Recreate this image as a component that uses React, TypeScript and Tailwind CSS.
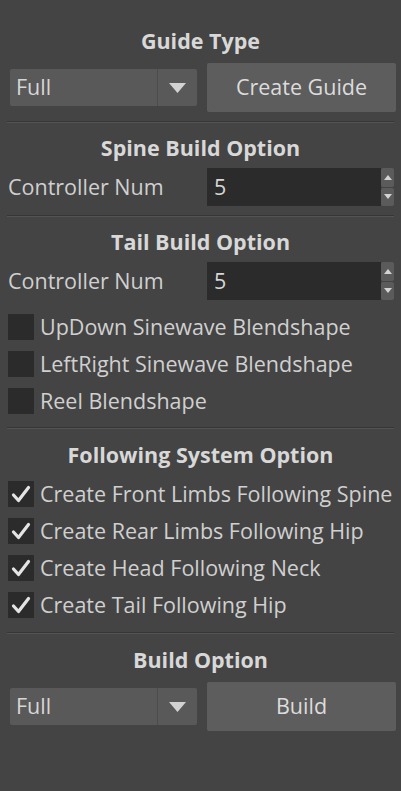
import React from "react";

function Title({ children }: { children: React.ReactNode }) {
  return (
    <div className="h-[34px] flex items-center justify-center text-[21.5px] font-bold text-[#d8d8d8]">
      {children}
    </div>
  );
}

function Separator() {
  return (
    <div className="mx-[7px]">
      <div className="h-px bg-[#363636]" />
      <div className="h-px bg-[#545454]" />
    </div>
  );
}

function Dropdown({ value }: { value: string }) {
  return (
    <div className="w-[187px] h-[37px] flex bg-[#595959] rounded-[2px]">
      <div className="flex-1 flex items-center pl-[6px] text-[21.5px] text-[#d6d6d6]">
        {value}
      </div>
      <div className="w-[40px] flex items-center justify-center border-l border-[#4c4c4c]">
        <svg width="17" height="10" viewBox="0 0 17 10">
          <path d="M0 0 H17 L8.5 10 Z" fill="#d2d2d2" />
        </svg>
      </div>
    </div>
  );
}

function Button({ label }: { label: string }) {
  return (
    <div className="w-[189px] h-[49px] flex items-center justify-center bg-[#5d5d5d] rounded-[2px] text-[21.5px] text-[#dcdcdc]">
      {label}
    </div>
  );
}

function SpinField({ value }: { value: string }) {
  return (
    <div className="flex items-center h-[38px] pl-[8px]">
      <div className="w-[199px] text-[21.5px] text-[#d0d0d0] whitespace-nowrap">Controller Num</div>
      <div className="w-[174px] h-[38px] flex items-center pl-[7px] bg-[#2b2b2b] text-[21.5px] text-[#d6d6d6]">
        {value}
      </div>
      <div className="w-[13px] h-[38px] flex flex-col gap-px">
        <div className="flex-1 flex items-center justify-center bg-[#5b5b5b] rounded-[2px]">
          <svg width="8" height="5" viewBox="0 0 8 5">
            <path d="M0 5 L4 0 L8 5 Z" fill="#d4d4d4" />
          </svg>
        </div>
        <div className="flex-1 flex items-center justify-center bg-[#5b5b5b] rounded-[2px]">
          <svg width="8" height="5" viewBox="0 0 8 5">
            <path d="M0 0 L4 5 L8 0 Z" fill="#d4d4d4" />
          </svg>
        </div>
      </div>
    </div>
  );
}

function Check({ label, checked }: { label: string; checked?: boolean }) {
  return (
    <div className="flex items-center h-[26px] pl-[8px]">
      <div className="w-[26px] h-[26px] flex items-center justify-center bg-[#2b2b2b]">
        {checked && (
          <svg width="20" height="18" viewBox="0 0 20 18">
            <path
              d="M2.5 10 L7.5 15.5 L17.5 2.5"
              fill="none"
              stroke="#e4e4e4"
              strokeWidth="3.2"
              strokeLinecap="round"
              strokeLinejoin="round"
            />
          </svg>
        )}
      </div>
      <span className="ml-[6px] text-[21.5px] text-[#d0d0d0] whitespace-nowrap">{label}</span>
    </div>
  );
}

export default function App() {
  return (
    <div className="w-[401px] h-[791px] bg-[#444444] font-['Open_Sans','Noto_Sans',sans-serif] overflow-hidden">
      <div className="pt-[24px]">
        <Title>Guide Type</Title>
        <div className="mt-[5px] flex items-center gap-[10px] pl-[10px]">
          <Dropdown value="Full" />
          <Button label="Create Guide" />
        </div>
      </div>

      <div className="mt-[9px]">
        <Separator />
      </div>

      <div className="mt-[8px]">
        <Title>Spine Build Option</Title>
        <div className="mt-[3px]">
          <SpinField value="5" />
        </div>
      </div>

      <div className="mt-[9px]">
        <Separator />
      </div>

      <div className="mt-[8px]">
        <Title>Tail Build Option</Title>
        <div className="mt-[3px]">
          <SpinField value="5" />
        </div>
        <div className="mt-[14px] flex flex-col gap-[11px]">
          <Check label="UpDown Sinewave Blendshape" />
          <Check label="LeftRight Sinewave Blendshape" />
          <Check label="Reel Blendshape" />
        </div>
      </div>

      <div className="mt-[13px]">
        <Separator />
      </div>

      <div className="mt-[9px]">
        <Title>Following System Option</Title>
        <div className="mt-[9px] flex flex-col gap-[11px]">
          <Check checked label="Create Front Limbs Following Spine" />
          <Check checked label="Create Rear Limbs Following Hip" />
          <Check checked label="Create Head Following Neck" />
          <Check checked label="Create Tail Following Hip" />
        </div>
      </div>

      <div className="mt-[14px]">
        <Separator />
      </div>

      <div className="mt-[9px]">
        <Title>Build Option</Title>
        <div className="mt-[5px] flex items-center gap-[10px] pl-[10px]">
          <Dropdown value="Full" />
          <Button label="Build" />
        </div>
      </div>
    </div>
  );
}
